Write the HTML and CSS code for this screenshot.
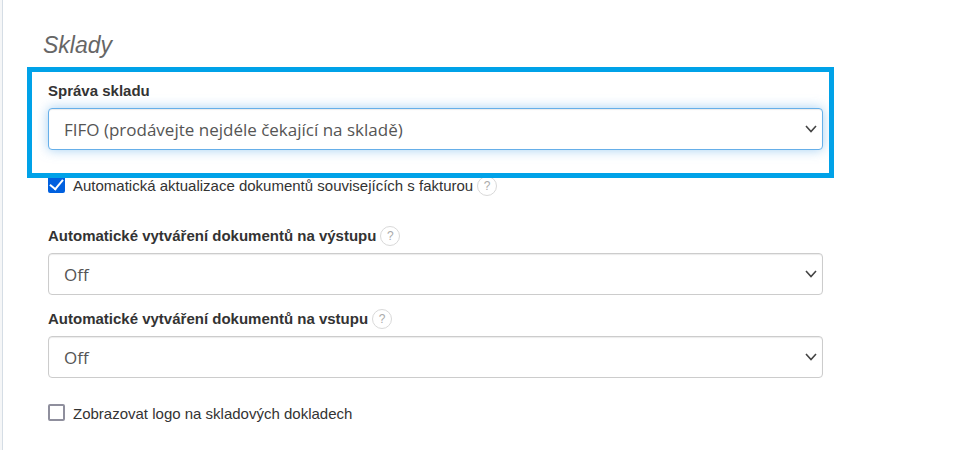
FILE: index.html
```html
<!DOCTYPE html>
<html lang="cs">
<head>
    <meta charset="UTF-8" />
    <meta name="viewport" content="width=device-width, initial-scale=1.0" />
    <title>Sklady</title>
    <link rel="stylesheet" href="styles.css">
</head>
<body>
    <main class="panel">
        <h2>Sklady</h2>
        <form action="">
            <div class="field highlight">
                <div class="label-row">
                    <label for="warehouse">Správa skladu</label>
                </div>
                <div class="select-box">
                    <select id="warehouse" name="warehouse" class="active">
                        <option value="fifo">FIFO (prodávejte nejdéle čekající na skladě)</option>
                    </select>
                    <svg class="arrow" viewBox="0 0 12 8" aria-hidden="true"><path d="M1 1L6 6.5L11 1" /></svg>
                </div>
            </div>

            <div class="check-row">
                <input type="checkbox" id="autoUpdate" name="autoUpdate" checked />
                <label for="autoUpdate">Automatická aktualizace dokumentů souvisejících s fakturou</label>
                <button type="button" class="help">?</button>
            </div>

            <div class="field">
                <div class="label-row">
                    <label for="output">Automatické vytváření dokumentů na výstupu</label>
                    <button type="button" class="help">?</button>
                </div>
                <div class="select-box">
                    <select id="output" name="output">
                        <option value="off">Off</option>
                    </select>
                    <svg class="arrow" viewBox="0 0 12 8" aria-hidden="true"><path d="M1 1L6 6.5L11 1" /></svg>
                </div>
            </div>

            <div class="field">
                <div class="label-row">
                    <label for="input">Automatické vytváření dokumentů na vstupu</label>
                    <button type="button" class="help">?</button>
                </div>
                <div class="select-box">
                    <select id="input" name="input">
                        <option value="off">Off</option>
                    </select>
                    <svg class="arrow" viewBox="0 0 12 8" aria-hidden="true"><path d="M1 1L6 6.5L11 1" /></svg>
                </div>
            </div>

            <div class="check-row last">
                <input type="checkbox" id="showLogo" name="showLogo" />
                <label for="showLogo">Zobrazovat logo na skladových dokladech</label>
            </div>
        </form>
    </main>
</body>
</html>
```
FILE: styles.css
```css
* {
    box-sizing: border-box;
}

body {
    margin: 0;
    padding-left: 2px;
    background-color: #f5f6f7;
    font-family: "Liberation Sans", Arial, sans-serif;
    font-size: 15px;
    line-height: 20px;
    color: #333;
}

.panel {
    min-height: 100vh;
    padding: 30px 138px 24px 24px;
    border-left: 1px solid #d5dde5;
    background-color: #fff;
}

h2 {
    margin: 0 0 7px;
    padding-left: 16px;
    font-size: 23px;
    line-height: 30px;
    font-weight: normal;
    font-style: italic;
    color: #666;
}

.field {
    padding: 0 11px 0 21px;
}

.highlight {
    position: relative;
    z-index: 1;
    padding: 9px 6px 23px 16px;
    border: 5px solid #00a2e8;
}

.label-row {
    display: flex;
    align-items: center;
    gap: 4px;
    min-height: 20px;
    margin-bottom: 7px;
    font-weight: bold;
}

.field + .field {
    margin-top: 14px;
}

.select-box {
    display: grid;
    align-items: center;
}

.select-box select,
.select-box .arrow {
    grid-area: 1 / 1;
}

select {
    width: 100%;
    height: 42px;
    padding: 0 32px 0 15px;
    border: 1px solid #ccc;
    border-radius: 4px;
    background-color: #fff;
    box-shadow: inset 0 1px 1px rgba(0, 0, 0, 0.08);
    font-family: "Open Sans", "Noto Sans", sans-serif;
    font-size: 17px;
    color: #555;
    appearance: none;
}

select.active {
    border-color: #66afe9;
    box-shadow: inset 0 1px 1px rgba(0, 0, 0, 0.08), 0 0 12px rgba(102, 175, 233, 0.6);
}

.arrow {
    justify-self: end;
    width: 12px;
    height: 8px;
    margin-right: 6px;
    fill: none;
    stroke: #444;
    stroke-width: 1.6;
    pointer-events: none;
}

.check-row {
    display: flex;
    align-items: center;
    height: 20px;
    margin-top: -2px;
    margin-bottom: 30px;
    padding-left: 21px;
}

.check-row.last {
    margin-top: 26px;
    margin-bottom: 0;
}

.check-row .help {
    margin-left: 4px;
}

input[type="checkbox"] {
    display: grid;
    place-content: center;
    width: 17px;
    height: 17px;
    margin: 0 8px 3px 0;
    border: 2px solid #8f8f9d;
    border-radius: 2px;
    background-color: #fff;
    appearance: none;
}

input[type="checkbox"]:checked {
    border-color: #0060df;
    background-color: #0060df;
}

input[type="checkbox"]:checked::before {
    content: "";
    width: 11px;
    height: 6px;
    margin-bottom: 4px;
    border-left: 2px solid #fff;
    border-bottom: 2px solid #fff;
    transform: rotate(-50deg);
}

.help {
    width: 20px;
    height: 20px;
    padding: 0;
    border: 1px solid #d9d9d9;
    border-radius: 50%;
    background-color: #fff;
    font-family: inherit;
    font-size: 12px;
    line-height: 18px;
    text-align: center;
    color: #aaa;
    cursor: pointer;
}
```
